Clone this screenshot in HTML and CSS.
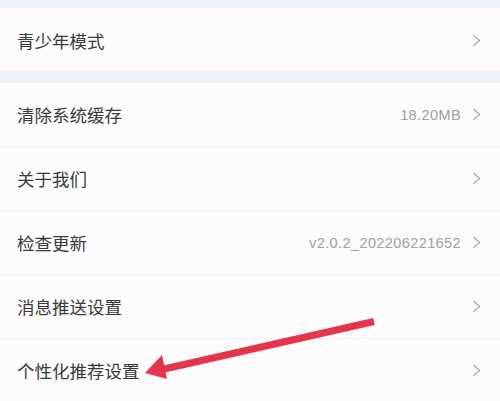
FILE: index.html
```html
<!DOCTYPE html>
<html lang="zh-CN">
<head>
<meta charset="utf-8">
<link rel="stylesheet" href="styles.css">
</head>
<body>
<div class="page">
  <div class="group group-first">
    <div class="row row-first">
      <span class="label">青少年模式</span>
      <span class="right"><svg class="chev" viewBox="0 0 10 14"><polyline points="1.5,1 8.5,7 1.5,13"/></svg></span>
    </div>
  </div>
  <div class="group">
    <div class="row">
      <span class="label">清除系统缓存</span>
      <span class="right"><span class="value">18.20MB</span><svg class="chev" viewBox="0 0 10 14"><polyline points="1.5,1 8.5,7 1.5,13"/></svg></span>
    </div>
    <div class="row">
      <span class="label">关于我们</span>
      <span class="right"><svg class="chev" viewBox="0 0 10 14"><polyline points="1.5,1 8.5,7 1.5,13"/></svg></span>
    </div>
    <div class="row">
      <span class="label">检查更新</span>
      <span class="right"><span class="value">v2.0.2_202206221652</span><svg class="chev" viewBox="0 0 10 14"><polyline points="1.5,1 8.5,7 1.5,13"/></svg></span>
    </div>
    <div class="row">
      <span class="label">消息推送设置</span>
      <span class="right"><svg class="chev" viewBox="0 0 10 14"><polyline points="1.5,1 8.5,7 1.5,13"/></svg></span>
    </div>
    <div class="row">
      <span class="label">个性化推荐设置</span>
      <span class="right"><svg class="chev" viewBox="0 0 10 14"><polyline points="1.5,1 8.5,7 1.5,13"/></svg></span>
    </div>
  </div>
  <svg class="annot" viewBox="0 0 500 401" width="500" height="401">
    <line x1="374" y1="321.5" x2="162" y2="369.5" stroke="#e5354b" stroke-width="7"/>
    <polygon points="145,373 162,355 167,379" fill="#e5354b"/>
  </svg>
</div>
</body>
</html>
```

FILE: styles.css
```css
html, body {
  margin: 0;
  padding: 0;
}
body {
  background: #eef3f9;
  font-family: "Noto Sans CJK SC", "Liberation Sans", sans-serif;
  width: 500px;
  height: 401px;
  overflow: hidden;
}
.page {
  position: relative;
  width: 500px;
  height: 401px;
  padding-top: 8px;
  box-sizing: border-box;
}
.group {
  background: #fbfbfb;
  display: flex;
  flex-direction: column;
}
.group-first {
  margin-bottom: 13px;
}
.row {
  height: 63px;
  border-bottom: 1px solid #efefef;
  display: flex;
  align-items: center;
  justify-content: space-between;
  padding: 0 19px 0 17px;
}
.row-first {
  height: 62px;
  border-bottom: none;
  padding-top: 3px;
  box-sizing: border-box;
}
.label {
  font-size: 17.5px;
  color: #3a3a3a;
  line-height: 1;
}
.right {
  display: flex;
  align-items: center;
  gap: 11px;
}
.value {
  font-family: "Liberation Sans", sans-serif;
  font-size: 14.5px;
  letter-spacing: 0.4px;
  color: #a0a0a0;
}
.chev {
  width: 9px;
  height: 13px;
  fill: none;
  stroke: #a0a0a0;
  stroke-width: 1.2;
}
.annot {
  position: absolute;
  left: 0;
  top: 0;
  pointer-events: none;
}
```
